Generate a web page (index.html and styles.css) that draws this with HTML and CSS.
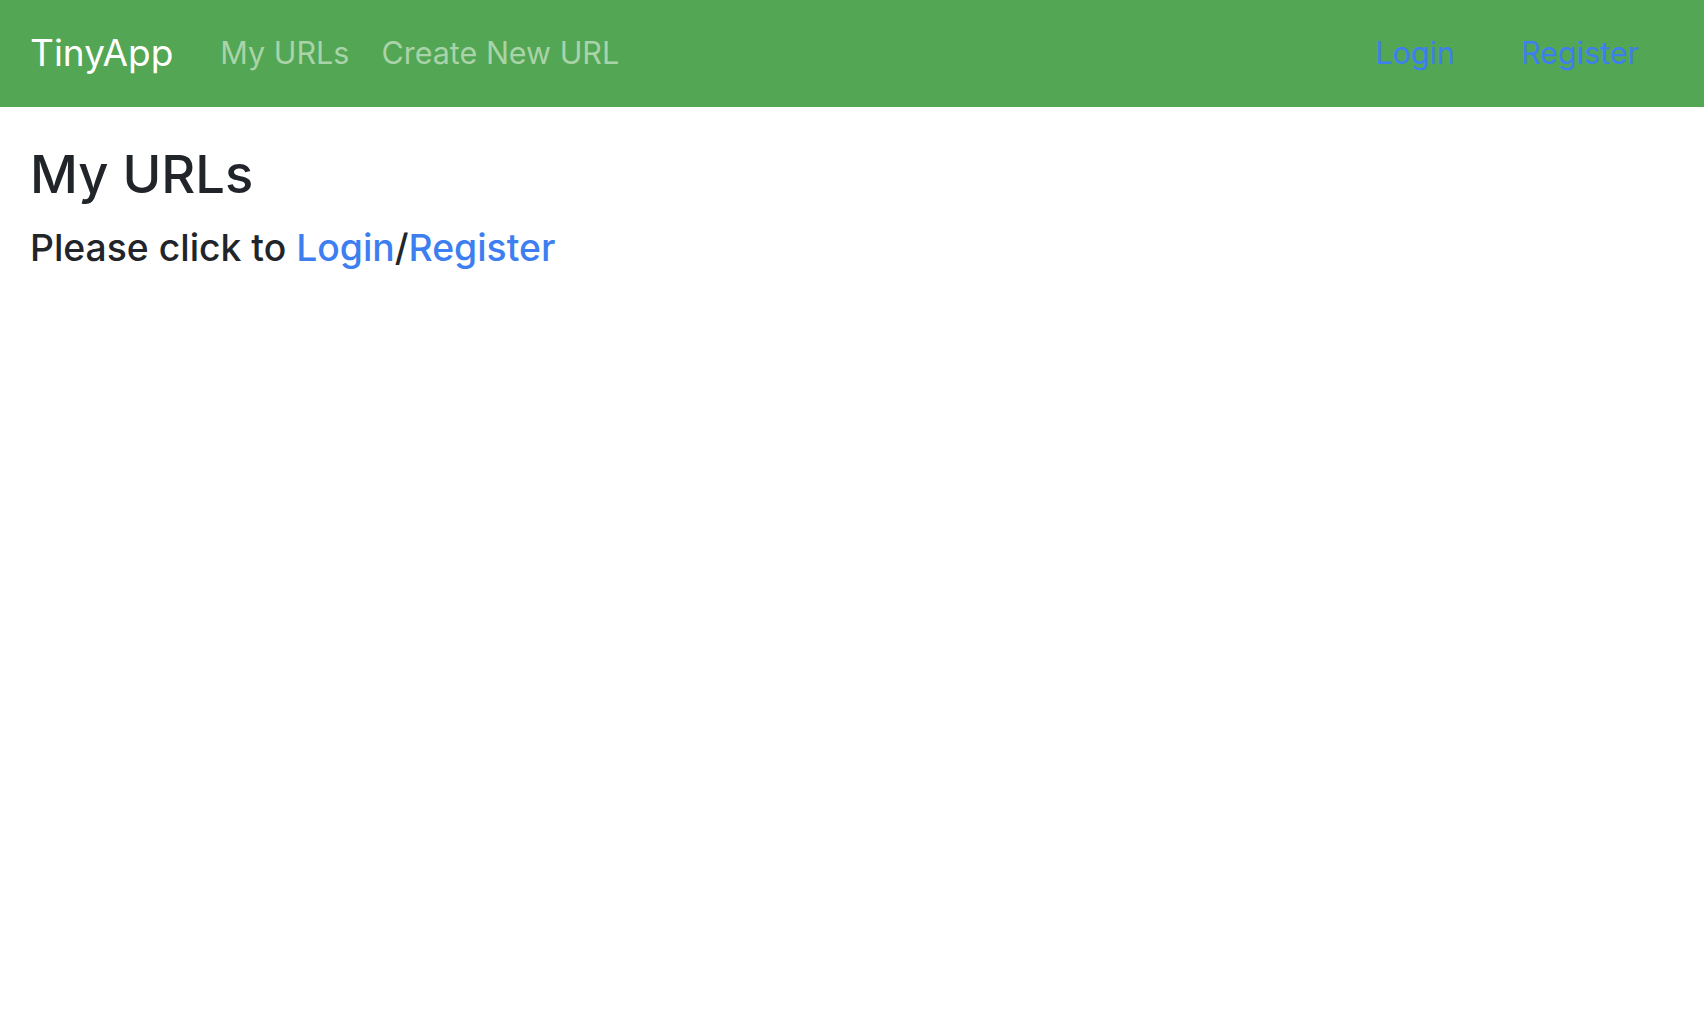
FILE: index.html
```html
<!DOCTYPE html>
<html lang="en">
<head>
<meta charset="utf-8">
<title>TinyApp</title>
<link rel="stylesheet" href="styles.css">
</head>
<body>
<nav class="navbar">
  <a class="brand" href="#">TinyApp</a>
  <ul class="nav-left">
    <li><a class="nav-link" href="#">My URLs</a></li>
    <li><a class="nav-link" href="#">Create New URL</a></li>
  </ul>
  <ul class="nav-right">
    <li><a class="auth-link" href="#">Login</a></li>
    <li><a class="auth-link" href="#">Register</a></li>
  </ul>
</nav>
<main class="content">
  <h1 class="title">My URLs</h1>
  <p class="prompt">Please click to <a href="#">Login</a>/<a href="#">Register</a></p>
</main>
</body>
</html>
```
FILE: styles.css
```css
html, body {
  margin: 0;
  padding: 0;
  background: #ffffff;
}
body {
  font-family: Inter, "Liberation Sans", sans-serif;
  color: #212529;
}
a { text-decoration: none; }
.navbar {
  display: flex;
  align-items: center;
  height: 107px;
  padding: 0 30px 2px;
  background: #53a653;
  box-sizing: border-box;
}
.brand {
  color: #ffffff;
  font-size: 37px;
  margin-right: 31px;
  line-height: 1;
}
.nav-left, .nav-right {
  list-style: none;
  display: flex;
  margin: 0;
  padding: 0;
}
.nav-right {
  margin-left: auto;
  gap: 34px;
  margin-right: 19px;
}
.nav-link {
  display: block;
  color: #a9d3a9;
  font-size: 30.5px;
  padding: 0 16px;
}
.auth-link {
  display: block;
  color: #3d7ef0;
  font-size: 30.5px;
  padding: 0 16px;
}
.content {
  padding: 0 30px;
}
.title {
  font-size: 52.5px;
  font-weight: 500;
  margin: 36px 0 0;
  line-height: 1.2;
}
.prompt {
  font-size: 37.3px;
  font-weight: 500;
  margin: 19px 0 0;
}
.prompt a { color: #3d7ef0; }
```
